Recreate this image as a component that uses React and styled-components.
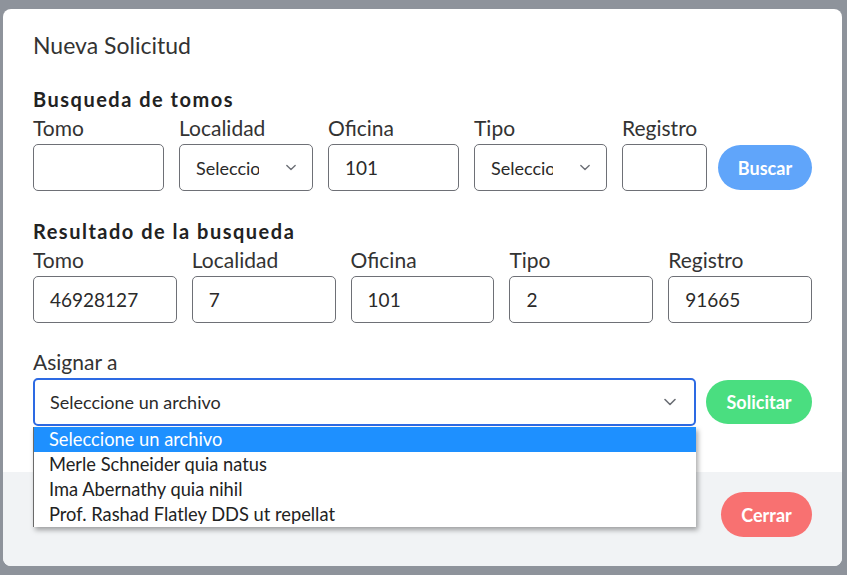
import styled, { createGlobalStyle } from "styled-components";

const GlobalStyle = createGlobalStyle`
  html, body {
    margin: 0;
    padding: 0;
    background: #8e939b;
  }
  body {
    font-family: "Lato", "Noto Sans", sans-serif;
    color: #2f2f2f;
  }
`;

const Overlay = styled.div`
  min-height: 575px;
  padding: 9px 0 0 3px;
  box-sizing: border-box;
`;

const Modal = styled.div`
  width: 839px;
  height: 557px;
  background: #fff;
  border-radius: 8px;
  display: flex;
  flex-direction: column;
`;

const Body = styled.div`
  height: 463px;
  box-sizing: border-box;
  padding: 22px 30px 0 30px;
  display: flex;
  flex-direction: column;
`;

const Title = styled.h2`
  margin: 0;
  font-size: 23px;
  line-height: 28px;
  font-weight: 400;
  color: #333;
`;

const SectionTitle = styled.h3`
  margin: ${(p) => p.$top}px 0 5px 0;
  font-size: 20px;
  line-height: 24px;
  font-weight: 700;
  letter-spacing: 1.5px;
  color: #222;
`;

const SearchRow = styled.div`
  display: flex;
  align-items: flex-end;
  gap: 15px;
`;

const ResultRow = styled.div`
  display: grid;
  grid-template-columns: repeat(5, 1fr);
  column-gap: 15px;
`;

const AssignRow = styled.div`
  display: flex;
  align-items: flex-end;
  gap: 10px;
  margin-top: 27px;
`;

const Field = styled.div`
  display: flex;
  flex-direction: column;
  gap: 4px;
  position: relative;
  width: ${(p) => (p.$w ? `${p.$w}px` : "auto")};
  flex: ${(p) => (p.$grow ? 1 : "none")};
  min-width: 0;
`;

const Label = styled.label`
  font-size: 21px;
  line-height: 24px;
  color: #333;
`;

const Input = styled.div`
  height: ${(p) => p.$h || 47}px;
  box-sizing: border-box;
  border: 1px solid #6e7076;
  border-radius: 5px;
  padding: 0 16px;
  display: flex;
  align-items: center;
  font-size: 19px;
  color: #2a2a2a;
`;

const SelectBox = styled.div`
  height: ${(p) => p.$h || 47}px;
  box-sizing: border-box;
  border: ${(p) => (p.$focused ? "2px solid #2d6ae3" : "1px solid #6e7076")};
  border-radius: 5px;
  padding: 0 ${(p) => p.$pr || 16}px 0 ${(p) => (p.$focused ? 15 : 16)}px;
  display: flex;
  align-items: center;
  gap: ${(p) => p.$gap || 24}px;
  font-size: ${(p) => p.$fs || 18}px;
  color: #2a2a2a;
`;

const SelectText = styled.span`
  flex: 1;
  min-width: 0;
  overflow: hidden;
  white-space: nowrap;
`;

const Button = styled.button`
  border: none;
  border-radius: 23px;
  height: ${(p) => p.$h || 45}px;
  width: ${(p) => p.$w}px;
  background: ${(p) => p.$bg};
  color: #fff;
  font-family: inherit;
  font-size: 18px;
  font-weight: 700;
  cursor: pointer;
  margin-left: ${(p) => p.$ml || 0}px;
  margin-bottom: ${(p) => p.$mb || 0}px;
  flex: none;
`;

const Dropdown = styled.ul`
  position: absolute;
  top: calc(100% + 1px);
  left: 0;
  width: 662px;
  margin: 0;
  padding: 0;
  list-style: none;
  background: #fff;
  border-left: 1px solid #6a6a6a;
  box-shadow: 2px 3px 5px rgba(0, 0, 0, 0.35);
  z-index: 5;
`;

const Option = styled.li`
  height: 25px;
  line-height: 25px;
  padding-left: 15px;
  font-size: 18.3px;
  color: ${(p) => (p.$active ? "#fff" : "#222")};
  background: ${(p) => (p.$active ? "#1e90ff" : "transparent")};
`;

const Footer = styled.div`
  flex: 1;
  background: #f1f3f5;
  border-radius: 0 0 8px 8px;
  display: flex;
  justify-content: flex-end;
  align-items: flex-start;
  padding: 20px 30px 0 30px;
`;

const Chevron = ({ w = 10 }) => (
  <svg width={w} height={w / 2 + 2} viewBox="0 0 12 7" fill="none">
    <polyline
      points="1,1 6,6 11,1"
      stroke="#6b6e75"
      strokeWidth="1.6"
      strokeLinecap="round"
      strokeLinejoin="round"
    />
  </svg>
);

const options = [
  "Seleccione un archivo",
  "Merle Schneider quia natus",
  "Ima Abernathy quia nihil",
  "Prof. Rashad Flatley DDS ut repellat",
];

const results = [
  ["Tomo", "46928127"],
  ["Localidad", "7"],
  ["Oficina", "101"],
  ["Tipo", "2"],
  ["Registro", "91665"],
];

export default function App() {
  return (
    <>
      <GlobalStyle />
      <Overlay>
        <Modal>
          <Body>
            <Title>Nueva Solicitud</Title>

            <SectionTitle $top={28}>Busqueda de tomos</SectionTitle>
            <SearchRow>
              <Field $w={131}>
                <Label>Tomo</Label>
                <Input />
              </Field>
              <Field $w={134}>
                <Label>Localidad</Label>
                <SelectBox $pr={16} $gap={27}>
                  <SelectText>Seleccione</SelectText>
                  <Chevron />
                </SelectBox>
              </Field>
              <Field $w={131}>
                <Label>Oficina</Label>
                <Input>101</Input>
              </Field>
              <Field $w={133}>
                <Label>Tipo</Label>
                <SelectBox $pr={16} $gap={27}>
                  <SelectText>Seleccione</SelectText>
                  <Chevron />
                </SelectBox>
              </Field>
              <Field $w={85}>
                <Label>Registro</Label>
                <Input />
              </Field>
              <Button $w={94} $bg="#60a5fa" $mb={1} $ml={-4}>
                Buscar
              </Button>
            </SearchRow>

            <SectionTitle $top={28}>Resultado de la busqueda</SectionTitle>
            <ResultRow>
              {results.map(([label, value]) => (
                <Field key={label}>
                  <Label>{label}</Label>
                  <Input>{value}</Input>
                </Field>
              ))}
            </ResultRow>

            <AssignRow>
              <Field $grow>
                <Label>Asignar a</Label>
                <SelectBox $focused $h={48} $pr={18}>
                  <SelectText>Seleccione un archivo</SelectText>
                  <Chevron w={12} />
                </SelectBox>
                <Dropdown>
                  {options.map((o, i) => (
                    <Option key={o} $active={i === 0}>
                      {o}
                    </Option>
                  ))}
                </Dropdown>
              </Field>
              <Button $w={106} $h={44} $bg="#4ade80" $mb={2}>
                Solicitar
              </Button>
            </AssignRow>
          </Body>
          <Footer>
            <Button $w={91} $bg="#f87171">
              Cerrar
            </Button>
          </Footer>
        </Modal>
      </Overlay>
    </>
  );
}
